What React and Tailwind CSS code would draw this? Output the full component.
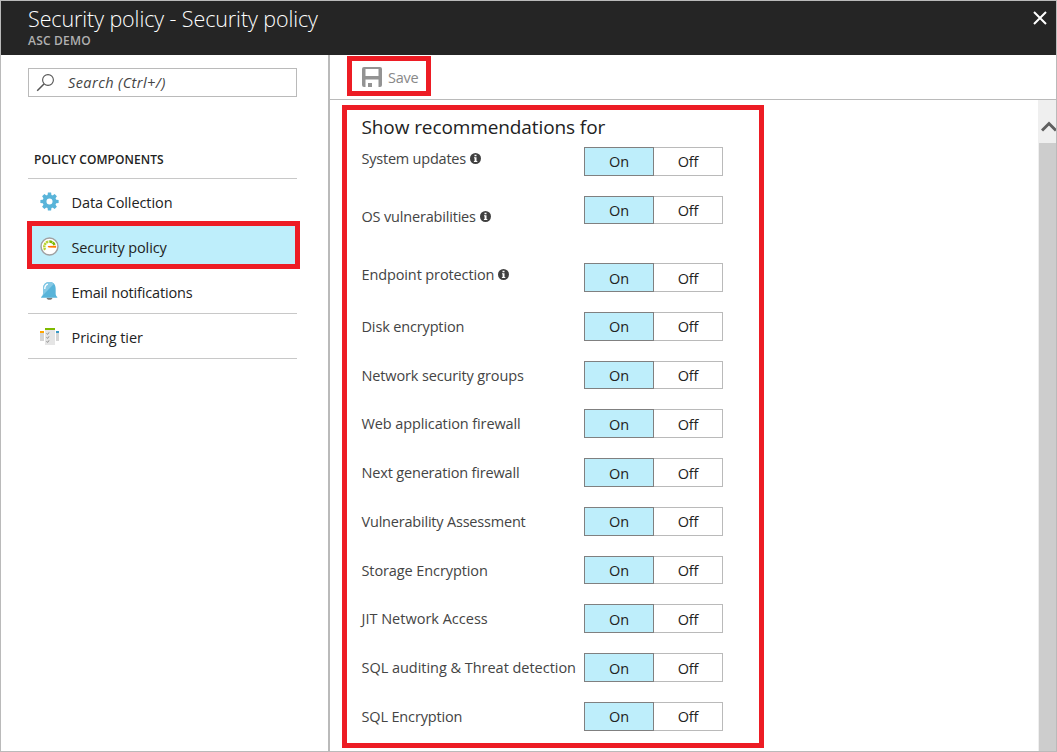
const text = "whitespace-nowrap";

function SearchIcon() {
  return (
    <svg width="18" height="18" viewBox="0 0 18 18" fill="none" stroke="#555" className="shrink-0">
      <circle cx="12" cy="6" r="5.400" strokeWidth="1.100" />
      <path d="M8 10L1.200 16.800" strokeWidth="1.500" />
    </svg>
  );
}

function GearIcon() {
  return (
    <svg width="19" height="19" viewBox="0 0 20 20" className="mb-px shrink-0">
      <g fill="#59b4d9">
        <path d="M8.3 0.4h3.4l.5 4H7.8zM8.3 19.6h3.4l.5-4H7.8zM0.4 8.3v3.4l4 .5V7.8zM19.6 8.3v3.4l-4 .5V7.8z" />
        <path d="M2.2 4.6L4.6 2.2l3.2 2.4-3.2 3.2zM17.8 4.6l-2.4-2.4-3.2 2.4 3.2 3.2zM2.2 15.4l2.4 2.4 3.2-2.4-3.2-3.2zM17.8 15.4l-2.4 2.4-3.2-2.4 3.2-3.2z" />
      </g>
      <circle cx="10" cy="10" r="5.2" fill="none" stroke="#59b4d9" strokeWidth="4" />
    </svg>
  );
}

function GaugeIcon() {
  return (
    <svg width="19" height="19" viewBox="0 0 20 20" fill="none" className="mb-px shrink-0">
      <circle cx="10" cy="10" r="8.9" fill="#fff" stroke="#a0a1a2" strokeWidth="1.5" />
      <path d="M5.500 13.500A5.600 5.600 0 0 1 9.2 4.800" stroke="#b8d432" strokeWidth="2.600" strokeDasharray="2.2 .5" />
      <path d="M9.800 4.800A5.700 5.700 0 0 1 15.300 8.500" stroke="#7fba00" strokeWidth="2.600" strokeDasharray="3.2 .5" />
      <path d="M8 9.500l9-.3v2l-8-.2z" fill="#ff7a00" />
    </svg>
  );
}

function BellIcon() {
  return (
    <svg width="19" height="20" viewBox="0 0 20 20" className="shrink-0">
      <path d="M7 17h6c0 1.4-1.1 2.3-3 2.3S7 18.400 7 17z" fill="#7a7a7a" />
      <path d="M10 .5c-4.300 0-6.800 2.700-6.800 7v5.200c0 1.800-.8 2.600-2 3.600v.9h17v-.9c-1.200-1-1.700-1.800-1.700-3.600V7.500c0-4.300-2.200-7-6.500-7z" fill="#59b4d9" />
      <path d="M10 .5c-4.300 0-6.800 2.700-6.800 7v5.200c0 1.500-.5 2.300-1.400 3.200L14.800 2.400C13.600 1.100 12 .5 10 .5z" fill="#86c9e5" />
      <path d="M5 8c0-2.500 1.200-4.500 3.300-5.200" stroke="#fff" strokeWidth="1.400" fill="none" />
    </svg>
  );
}

function PricingIcon() {
  return (
    <svg width="19" height="19" viewBox="0 0 19 19" className="mt-px shrink-0">
      <path d="M0 6h4v8H0zM16 6h3v8h-3z" fill="#d5d5d5" />
      <path d="M0 4h4v2H0z" fill="#ffa500" />
      <path d="M16 4h3v2h-3z" fill="#3999c6" />
      <path d="M5 3h10v15H5z" fill="#e5e5e5" />
      <path d="M5 1h10v2H5z" fill="#7fba00" />
      <path d="M6.500 6.400l1 1 1.500-2M6.500 10.400l1 1 1.500-2M6.500 14.400l1 1 1.500-2" stroke="#888" strokeWidth="1" fill="none" />
    </svg>
  );
}

function SaveIcon() {
  return (
    <svg width="20" height="20" viewBox="0 0 20 20" className="mt-[2px] shrink-0">
      <path fillRule="evenodd" fill="#939393" d="M2 0h16a2 2 0 0 1 2 2v16a2 2 0 0 1-2 2h-1.500v-7.500H3.500V20H2a2 2 0 0 1-2-2V2a2 2 0 0 1 2-2zM3.500 2v7h13V2z" />
      <path d="M6 16h4v4H6z" fill="#939393" />
    </svg>
  );
}

function InfoIcon() {
  return (
    <svg width="11" height="11" viewBox="0 0 11 11" className="shrink-0">
      <circle cx="5.500" cy="5.500" r="5.500" fill="#404040" />
      <path d="M4.500 1.800h2v1.500h-2zM4 4.300h2.500v3.600h.8v1H3.900v-1h.7V5.200H4z" fill="#fff" />
    </svg>
  );
}

const menu = [
  { label: "Data Collection", Icon: GearIcon, fit: "tracking-[-0.09px] pt-[2px]" },
  { label: "Security policy", Icon: GaugeIcon, active: true, fit: "tracking-[-0.11px] pt-[2px]" },
  { label: "Email notifications", Icon: BellIcon, line: true, fit: "tracking-[-0.15px] pt-[3px]" },
  { label: "Pricing tier", Icon: PricingIcon, line: true, fit: "tracking-[-0.09px] pt-[3px]" },
];

const settings = [
  { label: "System updates", info: true, box: "h-[23px]", fit: "tracking-[-0.22px]" },
  { label: "OS vulnerabilities", info: true, row: "h-[67px]", box: "h-[41px]", short: true, fit: "tracking-[-0.18px]" },
  { label: "Endpoint protection", info: true, box: "h-[23px]", low: true, fit: "tracking-[-0.12px]" },
  { label: "Disk encryption", fit: "tracking-[-0.15px]" },
  { label: "Network security groups", row: "h-[48px]", short: true, fit: "tracking-[-0.14px]" },
  { label: "Web application firewall", low: true, fit: "tracking-[-0.11px]" },
  { label: "Next generation firewall", low: true, fit: "tracking-[-0.17px]" },
  { label: "Vulnerability Assessment", fit: "tracking-[-0.2px]" },
  { label: "Storage Encryption", row: "h-[48px]", short: true, fit: "tracking-[-0.1px]" },
  { label: "JIT Network Access", low: true, fit: "tracking-[0px]" },
  { label: "SQL auditing & Threat detection", low: true, fit: "tracking-[-0.03px]" },
  { label: "SQL Encryption", fit: "tracking-[-0.15px]" },
];

function Toggle({ short, low }) {
  const pad = low ? "pt-[4px]" : "pt-[3px]";
  return (
    <div className={`flex w-[139px] text-[14.500px] leading-[21px] tracking-[-0.2px] text-[#222] ${short ? "h-[28px]" : "h-[29px]"}`}>
      <button className={`flex w-[70px] items-start justify-center border border-[#808080] bg-[#beeefb] ${pad}`}>On</button>
      <button className={`flex w-[69px] items-start justify-center border border-l-0 border-[#bababa] bg-white ${pad}`}>Off</button>
    </div>
  );
}

export default function App() {
  return (
    <div className="flex h-[752px] w-[1057px] flex-col overflow-hidden border border-[#bababa] bg-white font-['Open_Sans','Noto_Sans',sans-serif] text-[14.500px] leading-[21px] text-[#222]">
      <header className="flex h-[54px] shrink-0 justify-between bg-[#252525] pl-[27px]">
        <div>
          <h1 className={`${text} mt-[3px] h-[30px] text-[21.500px] leading-[30px] font-light tracking-[-0.1px] text-white`}>Security policy - Security policy</h1>
          <p className={`${text} h-[14px] text-[12px] leading-[13px] font-semibold tracking-[0.2px] text-[#b0b0b0]`}>ASC DEMO</p>
        </div>
        <svg width="14" height="14" viewBox="0 0 14 14" className="mt-[10px] mr-[9px]" stroke="#fff" strokeWidth="2">
          <path d="M1 1l12 12M13 1L1 13" />
        </svg>
      </header>

      <div className="flex min-h-0 flex-1">
        <aside className="w-[329px] shrink-0 border-r-2 border-[#bababa] pt-[13px] pr-[31px] pl-[27px]">
          <div className="flex h-[29px] w-[269px] items-center gap-[14px] border border-[#bababa] pl-[7px]">
            <SearchIcon />
            <span className={`${text} tracking-[0.42px] text-[#444] italic`}>Search (Ctrl+/)</span>
          </div>
          <h2 className={`${text} mt-[53px] h-[29px] w-[269px] border-b border-[#c8c8c8] pl-[6px] text-[12px] leading-[20px] font-semibold tracking-[0.06px]`}>POLICY COMPONENTS</h2>
          <nav className="w-[269px]">
            {menu.map(({ label, Icon, active, line, fit }) => (
              <div key={label} className={`relative flex h-[45px] items-center gap-[12.500px] pl-[12px] ${active ? "bg-[#beeefb]" : ""} ${line ? "border-b border-[#c8c8c8]" : ""}`}>
                <Icon />
                <span className={`${text} ${fit}`}>{label}</span>
                {active && <div className="absolute -top-[3px] -left-px h-[48px] w-[273px] border-[5px] border-[#ed1c24]" />}
              </div>
            ))}
          </nav>
        </aside>

        <main className="flex min-w-0 flex-1 flex-col">
          <div className="flex h-[45px] shrink-0 border-b border-[#bababa] pt-px pl-[17px]">
            <button className="flex h-[40px] w-[84px] items-center gap-[6px] border-[5px] border-[#ed1c24] pl-[10px] text-[#888]">
              <SaveIcon />
              <span className="pt-[3px] tracking-[-0.25px]">Save</span>
            </button>
          </div>
          <div className="flex min-h-0 flex-1 justify-between">
            <section className="mt-[5px] ml-[12px] h-[643px] w-[422px] border-[5px] border-[#ed1c24] pt-[4px] pl-[14px]">
              <h3 className={`${text} h-[33px] pl-[0.5px] text-[19px] leading-[27px] tracking-[-0.1px]`}>Show recommendations for</h3>
              {settings.map(({ label, info, row, box, short, low, fit }) => (
                <div key={label} className={`flex ${row || "h-[49px]"}`}>
                  <div className={`flex w-[223px] items-center gap-[4px] self-start pl-[0.5px] text-[#444] ${box || "h-[29px]"}`}>
                    <span className={`${text} ${fit}`}>{label}</span>
                    {info && <InfoIcon />}
                  </div>
                  <Toggle short={short} low={low} />
                </div>
              ))}
            </section>
            <div className="w-[18px] border-l border-[#efefef] bg-[#cdcdcd]">
              <div className="h-[43px] bg-[#efefef] pt-[20px] pl-[2px]">
                <svg width="15" height="12" viewBox="0 0 15 12" fill="none" stroke="#606060" strokeWidth="3">
                  <path d="M1 10.500L8 3.500L15 10.500" />
                </svg>
              </div>
            </div>
          </div>
        </main>
      </div>
    </div>
  );
}
